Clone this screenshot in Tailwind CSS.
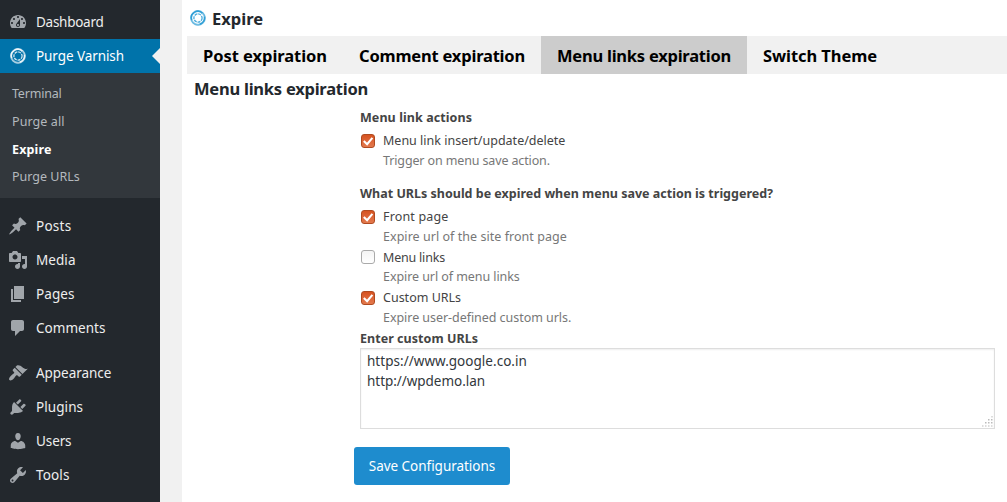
<!DOCTYPE html>
<html lang="en">
<head>
<meta charset="utf-8">
<title>Expire</title>
<script src="https://cdn.jsdelivr.net/npm/@tailwindcss/browser@4"></script>
</head>
<body class="flex h-[502px] overflow-hidden bg-[#f1f1f1] font-['Noto_Sans',sans-serif] text-[13.5px] text-[#23282d]">
<svg class="hidden">
  <symbol id="swirl" viewBox="0 0 16 16">
    <g fill="none" stroke="currentColor">
      <circle cx="8" cy="8" r="7.3" stroke-width="1.2" opacity=".45"/>
      <path d="M1.8 10.2A6.5 6.5 0 0 1 12.6 3.4M14.4 6.5A6.5 6.5 0 0 1 9.5 14.3" stroke-width="1.7" opacity=".9"/>
      <path d="M12.6 3.4A6.5 6.5 0 0 1 14.4 6.5M9.5 14.3A6.5 6.5 0 0 1 1.8 10.2" stroke-width="1.5" opacity=".55"/>
      <circle cx="8" cy="8" r="4.1" stroke-width="1.3" stroke-dasharray="3 .8" opacity=".8"/>
    </g>
  </symbol>
  <symbol id="check" viewBox="0 0 14 14">
    <path d="M2.8 7l3.3 3.2 5.3-6.4" fill="none" stroke="#fff" stroke-width="2.1" />
  </symbol>
</svg>

<nav class="h-full w-[160px] shrink-0 bg-[#23282d] pt-[5px] text-[#eee]">
  <a class="flex h-[34px] items-center gap-2 pl-2"><svg class="size-5 fill-[#a0a5aa]" viewBox="0 0 20 20"><path d="M3.76 16h12.48c1.1-1.37 1.76-3.11 1.76-5 0-4.42-3.58-8-8-8s-8 3.58-8 8c0 1.89.66 3.63 1.76 5zM10 4c.55 0 1 .45 1 1s-.45 1-1 1-1-.45-1-1 .45-1 1-1zM6 6c.55 0 1 .45 1 1s-.45 1-1 1-1-.45-1-1 .45-1 1-1zm8 0c.55 0 1 .45 1 1s-.45 1-1 1-1-.45-1-1 .45-1 1-1zm-5.37 5.55L12 7v6c0 1.1-.9 2-2 2s-2-.9-2-2c0-.57.24-1.08.63-1.45zM4 10c.55 0 1 .45 1 1s-.45 1-1 1-1-.45-1-1 .45-1 1-1zm12 0c.55 0 1 .45 1 1s-.45 1-1 1-1-.45-1-1 .45-1 1-1zm-5 3c0-.55-.45-1-1-1s-1 .45-1 1 .45 1 1 1 1-.45 1-1z"/></svg><span class="tracking-[-0.27px]">Dashboard</span></a>
  <a class="relative flex h-[34px] items-center gap-2 bg-[#0073aa] pl-2 text-white">
    <span class="flex size-5 items-center justify-center"><svg class="size-4 text-white"><use href="#swirl"/></svg></span><span class="tracking-[-0.08px]">Purge Varnish</span>
    <span class="absolute right-0 top-[9px] border-y-8 border-r-8 border-y-transparent border-r-[#f1f1f1]"></span>
  </a>
  <div class="flex h-[125px] flex-col bg-[#32373c] pl-3 pt-[7px] text-[12.5px] text-[#b4b9be]">
    <a class="h-7 leading-[27px] tracking-[-0.21px]">Terminal</a>
    <a class="h-7 leading-[27px] tracking-[0.08px]">Purge all</a>
    <a class="h-[27px] leading-[27px] font-bold tracking-[0.14px] text-white">Expire</a>
    <a class="h-7 leading-[27px]">Purge URLs</a>
  </div>
  <div class="mt-[11px]">
    <a class="flex h-[34px] items-center gap-2 pl-2"><svg class="size-5 fill-[#a0a5aa]" viewBox="0 0 20 20"><path d="M10.44 3.02l1.82-1.82 6.36 6.35-1.83 1.82c-1.05-.68-2.48-.57-3.41.36l-.75.75c-.92.93-1.04 2.35-.35 3.41l-1.83 1.82-2.41-2.41-2.8 2.79c-.42.42-3.38 2.71-3.8 2.29s1.86-3.39 2.28-3.81l2.79-2.79L4.1 9.36l1.83-1.82c1.05.69 2.48.57 3.4-.36l.75-.75c.93-.92 1.05-2.35.36-3.41z"/></svg><span class="tracking-[0.27px]">Posts</span></a>
    <a class="flex h-[34px] items-center gap-2 pl-2"><svg class="size-5 fill-[#a0a5aa]" viewBox="0 0 20 20"><path d="M13 11V4c0-.55-.45-1-1-1h-1.67L9 1H5L3.67 3H2c-.55 0-1 .45-1 1v7c0 .55.45 1 1 1h10c.55 0 1-.45 1-1zM7 4.5c1.38 0 2.5 1.12 2.5 2.5S8.38 9.5 7 9.5 4.5 8.38 4.5 7 5.62 4.5 7 4.5zM14 6h5v10.5c0 1.38-1.12 2.5-2.5 2.5S14 17.88 14 16.5s1.12-2.5 2.5-2.5c.17 0 .34.02.5.05V9h-3V6zm-4 8.05V13h2v3.5c0 1.38-1.12 2.5-2.5 2.5S7 17.88 7 16.5 8.12 14 9.5 14c.17 0 .34.02.5.05z"/></svg><span class="tracking-[0.06px]">Media</span></a>
    <a class="flex h-[34px] items-center gap-2 pl-2"><svg class="size-5 fill-[#a0a5aa]" viewBox="0 0 20 20"><path d="M6 15V2h10v13H6zm-1 1h8v2H3V5h2v11z"/></svg><span class="tracking-[0.08px]">Pages</span></a>
    <a class="flex h-[34px] items-center gap-2 pl-2"><svg class="size-5 fill-[#a0a5aa]" viewBox="0 0 20 20"><path d="M5 2h9c1.1 0 2 .9 2 2v7c0 1.1-.9 2-2 2h-2l-5 5v-5H5c-1.1 0-2-.9-2-2V4c0-1.1.9-2 2-2z"/></svg><span class="tracking-[0.03px]">Comments</span></a>
  </div>
  <div class="mt-[11px]">
    <a class="flex h-[34px] items-center gap-2 pl-2"><svg class="size-5 fill-[#a0a5aa]" viewBox="0 0 20 20"><path d="M14.48 11.06L7.41 3.99l1.5-1.5c.5-.56 2.3-.47 3.51.32 1.21.8 1.43 1.28 2.91 2.1 1.18.64 2.45 1.26 4.45.85zm-.71.71L6.7 4.7 4.93 6.47c-.39.39-.39 1.02 0 1.41l1.06 1.06c.39.39.39 1.03 0 1.42-.6.6-1.43 1.11-2.21 1.69-.35.26-.7.53-1.01.84C1.43 14.23.4 16.08 1.4 17.07c.99 1 2.84-.03 4.18-1.36.31-.31.58-.66.85-1.02.57-.78 1.08-1.61 1.69-2.21.39-.39 1.02-.39 1.41 0l1.06 1.06c.39.39 1.02.39 1.41 0z"/></svg><span class="tracking-[-0.05px]">Appearance</span></a>
    <a class="flex h-[34px] items-center gap-2 pl-2"><svg class="size-5 fill-[#a0a5aa]" viewBox="0 0 20 20"><path d="M13.11 4.36L9.87 7.6 8 5.73l3.24-3.24c.35-.34 1.05-.2 1.56.32.52.51.66 1.21.31 1.55zm-8 1.77l.91-1.12 9.01 9.01-1.19.84c-.71.71-2.63 1.16-3.82 1.16H6.14L4.9 17.26c-.59.59-1.54.59-2.12 0-.59-.58-.59-1.53 0-2.12l1.24-1.24v-3.88c0-1.13.4-3.19 1.09-3.89zm7.26 3.97l3.24-3.24c.34-.35 1.04-.21 1.55.31.52.51.66 1.21.31 1.55l-3.24 3.25z"/></svg><span class="tracking-[0.08px]">Plugins</span></a>
    <a class="flex h-[34px] items-center gap-2 pl-2"><svg class="size-5 fill-[#a0a5aa]" viewBox="0 0 20 20"><path d="M10 9.25c-2.27 0-2.73-3.44-2.73-3.44C7 4.02 7.82 2 9.97 2c2.16 0 2.98 2.02 2.71 3.81 0 0-.41 3.44-2.68 3.44zm0 2.57L12.72 10c2.39 0 4.52 2.33 4.52 4.53v2.49s-3.65 1.13-7.24 1.13c-3.65 0-7.24-1.13-7.24-1.13v-2.49c0-2.25 1.94-4.48 4.47-4.48z"/></svg><span class="tracking-[-0.1px]">Users</span></a>
    <a class="flex h-[34px] items-center gap-2 pl-2"><svg class="size-5 fill-[#a0a5aa]" viewBox="0 0 20 20"><path d="M16.68 9.77c-1.34 1.34-3.3 1.67-4.95.99l-5.41 6.52c-.99.99-2.59.99-3.58 0s-.99-2.59 0-3.57l6.52-5.42c-.68-1.65-.35-3.61.99-4.95 1.28-1.28 3.12-1.62 4.72-1.06l-2.89 2.89 2.82 2.82 2.86-2.87c.53 1.58.18 3.39-1.08 4.65zM3.81 16.21c.4.39 1.04.39 1.43 0 .4-.4.4-1.04 0-1.43-.39-.4-1.03-.4-1.43 0-.39.39-.39 1.03 0 1.43z"/></svg><span class="tracking-[0.13px]">Tools</span></a>
  </div>
</nav>

<main class="ml-[22px] h-full flex-1 bg-white pl-[5px]">
  <h1 class="flex h-9 items-center gap-[6px] pl-[3px] text-[16.5px] font-bold tracking-[0.03px]">
    <svg class="size-4 text-[#1d96d2]"><use href="#swirl"/></svg><span class="pt-[2px]">Expire</span>
  </h1>
  <div class="flex h-[38px] whitespace-nowrap bg-[#f1f1f1] text-[16.5px] font-bold leading-[39px] text-black">
    <a class="w-[156px] pl-4 tracking-[-0.05px]">Post expiration</a>
    <a class="w-[198px] pl-4 tracking-[-0.2px]">Comment expiration</a>
    <a class="w-[206px] bg-[#ccc] pl-4 tracking-[-0.24px]">Menu links expiration</a>
    <a class="pl-4 tracking-[-0.07px]">Switch Theme</a>
  </div>
  <h2 class="h-[33px] pl-[7px] text-[16.5px] font-bold leading-[30px] tracking-[-0.24px]">Menu links expiration</h2>
  <form class="ml-[173px] w-[635px] text-[12.5px] leading-5 text-[#444]">
    <div class="h-5 pt-px font-bold tracking-[0.08px]">Menu link actions</div>
    <label class="mt-1 flex h-5 items-center gap-2 pl-px"><span class="size-[14px] rounded-[3px] border border-[#b04a20] bg-linear-to-b from-[#d6521f] to-[#e3794d]"><svg class="-m-px size-[14px]"><use href="#check"/></svg></span><span>Menu link insert/update/delete</span></label>
    <p class="h-[19px] pl-[23px] leading-[19px] tracking-[-0.13px] text-[#777]">Trigger on menu save action.</p>
    <div class="mt-[14px] whitespace-nowrap font-bold">What URLs should be expired when menu save action is triggered?</div>
    <label class="mt-[3px] flex h-5 items-center gap-2 pl-px"><span class="size-[14px] rounded-[3px] border border-[#b04a20] bg-linear-to-b from-[#d6521f] to-[#e3794d]"><svg class="-m-px size-[14px]"><use href="#check"/></svg></span><span class="tracking-[0.16px]">Front page</span></label>
    <p class="h-[19px] pl-[23px] leading-[19px] tracking-[0.04px] text-[#777]">Expire url of the site front page</p>
    <label class="mt-px flex h-5 items-center gap-2 pl-px"><span class="size-[14px] rounded-[3px] border border-[#aaa] bg-linear-to-b from-[#f4f4f4] to-white"></span><span class="pt-[2px] tracking-[-0.2px]">Menu links</span></label>
    <p class="h-[19px] pl-[23px] leading-[19px] tracking-[-0.07px] text-[#777]">Expire url of menu links</p>
    <label class="mt-[2px] flex h-5 items-center gap-2 pl-px"><span class="size-[14px] rounded-[3px] border border-[#b04a20] bg-linear-to-b from-[#d6521f] to-[#e3794d]"><svg class="-m-px size-[14px]"><use href="#check"/></svg></span><span>Custom URLs</span></label>
    <p class="h-[19px] pl-[23px] leading-[19px] tracking-[-0.05px] text-[#777]">Expire user-defined custom urls.</p>
    <div class="mt-px h-5 pt-px font-bold tracking-[0.04px]">Enter custom URLs</div>
    <div class="flex h-[81px] justify-between border border-[#ddd] pl-[6px] pt-[2px] text-[13.5px] text-[#32373c] shadow-[inset_0_1px_2px_rgba(0,0,0,0.07)]">
      <div><div class="tracking-[0.03px]">https://www.google.co.in</div><div class="tracking-[-0.04px]">http://wpdemo.lan</div></div>
      <svg class="mr-px mb-px size-[11px] self-end fill-[#bbb]" viewBox="0 0 11 11"><path d="M9.5 0h1v1.5h-1zM6 3h1.5v1.5H6zM9 3h1.5v1.5H9zM3 6h1.5v1.5H3zM6 6h1.5v1.5H6zM9 6h1.5v1.5H9zM0 9.5h1.5v1H0zM3 9.5h1.5v1H3zM6 9.5h1.5v1H6zM9 9.5h1.5v1H9z"/></svg>
    </div>
    <button type="button" class="-ml-[6px] mt-[18px] block h-[38px] w-[156px] rounded-[3px] bg-[#1e8cce] text-[13.5px] tracking-[-0.03px] text-white">Save Configurations</button>
  </form>
</main>
</body>
</html>
